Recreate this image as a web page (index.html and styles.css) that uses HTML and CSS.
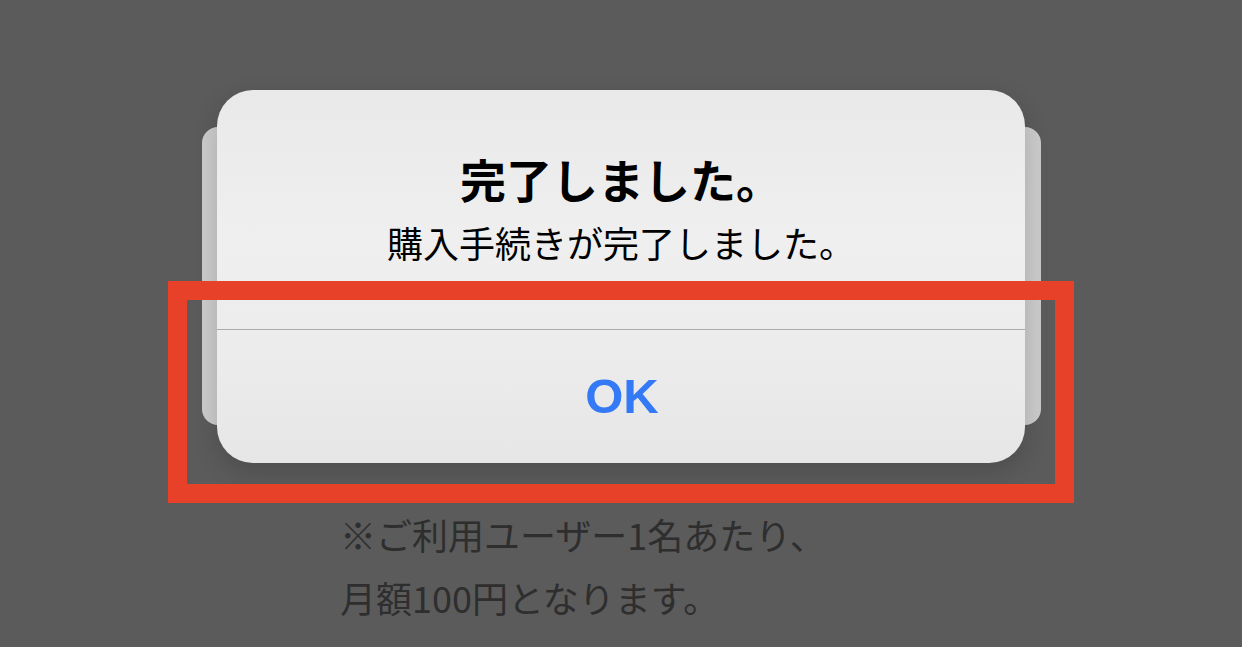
FILE: index.html
```html
<!DOCTYPE html>
<html lang="ja">
<head>
<meta charset="utf-8">
<title>完了しました。</title>
<link rel="stylesheet" href="styles.css">
</head>
<body>
<div class="stage">
  <div class="back-card"></div>
  <div class="dialog">
    <div class="dialog-body">
      <div class="dialog-title">完了しました。</div>
      <div class="dialog-message">購入手続きが完了しました。</div>
    </div>
    <div class="dialog-actions">
      <span class="dialog-button">OK</span>
    </div>
  </div>
  <div class="highlight"></div>
  <p class="note">※ご利用ユーザー1名あたり、<br>月額100円となります。</p>
</div>
</body>
</html>
```
FILE: styles.css
```css
html, body {
  margin: 0;
  padding: 0;
  background: #5b5b5b;
  width: 1242px;
  height: 647px;
  overflow: hidden;
}

.stage {
  position: relative;
  width: 1242px;
  height: 647px;
  padding-top: 90px;
  box-sizing: border-box;
  font-family: "Noto Sans CJK JP", "Noto Sans", sans-serif;
}

.back-card {
  position: absolute;
  left: 202px;
  top: 127px;
  width: 839px;
  height: 298px;
  background: #cbcbcb;
  border-radius: 16px;
}

.dialog {
  position: relative;
  width: 808px;
  height: 373px;
  margin: 0 auto;
  border-radius: 36px;
  background: linear-gradient(180deg, #e9e9e9 0%, #efefef 40%, #ececec 70%, #e6e6e6 100%);
  box-shadow: 0 8px 24px rgba(0, 0, 0, 0.16);
  display: flex;
  flex-direction: column;
  overflow: hidden;
}

.dialog-body {
  height: 240px;
  box-sizing: border-box;
  padding-top: 58px;
  border-bottom: 1px solid #acacac;
  text-align: center;
  color: #000;
}

.dialog-title {
  font-size: 46px;
  font-weight: 700;
  line-height: 60px;
}

.dialog-message {
  margin-top: 9px;
  font-size: 36px;
  line-height: 50px;
}

.dialog-actions {
  flex: 1;
  display: flex;
  align-items: center;
  justify-content: center;
}

.dialog-button {
  font-family: "Liberation Sans", Arial, sans-serif;
  font-size: 49px;
  font-weight: 700;
  color: #3479f6;
  line-height: 1;
  margin-left: 2px;
}

.highlight {
  position: absolute;
  left: 168px;
  top: 281px;
  width: 906px;
  height: 222px;
  box-sizing: border-box;
  border: 19px solid #e8412a;
}

.note {
  margin: 40px 0 0 340px;
  font-size: 36px;
  line-height: 63px;
  color: #2e2e2e;
}
```
